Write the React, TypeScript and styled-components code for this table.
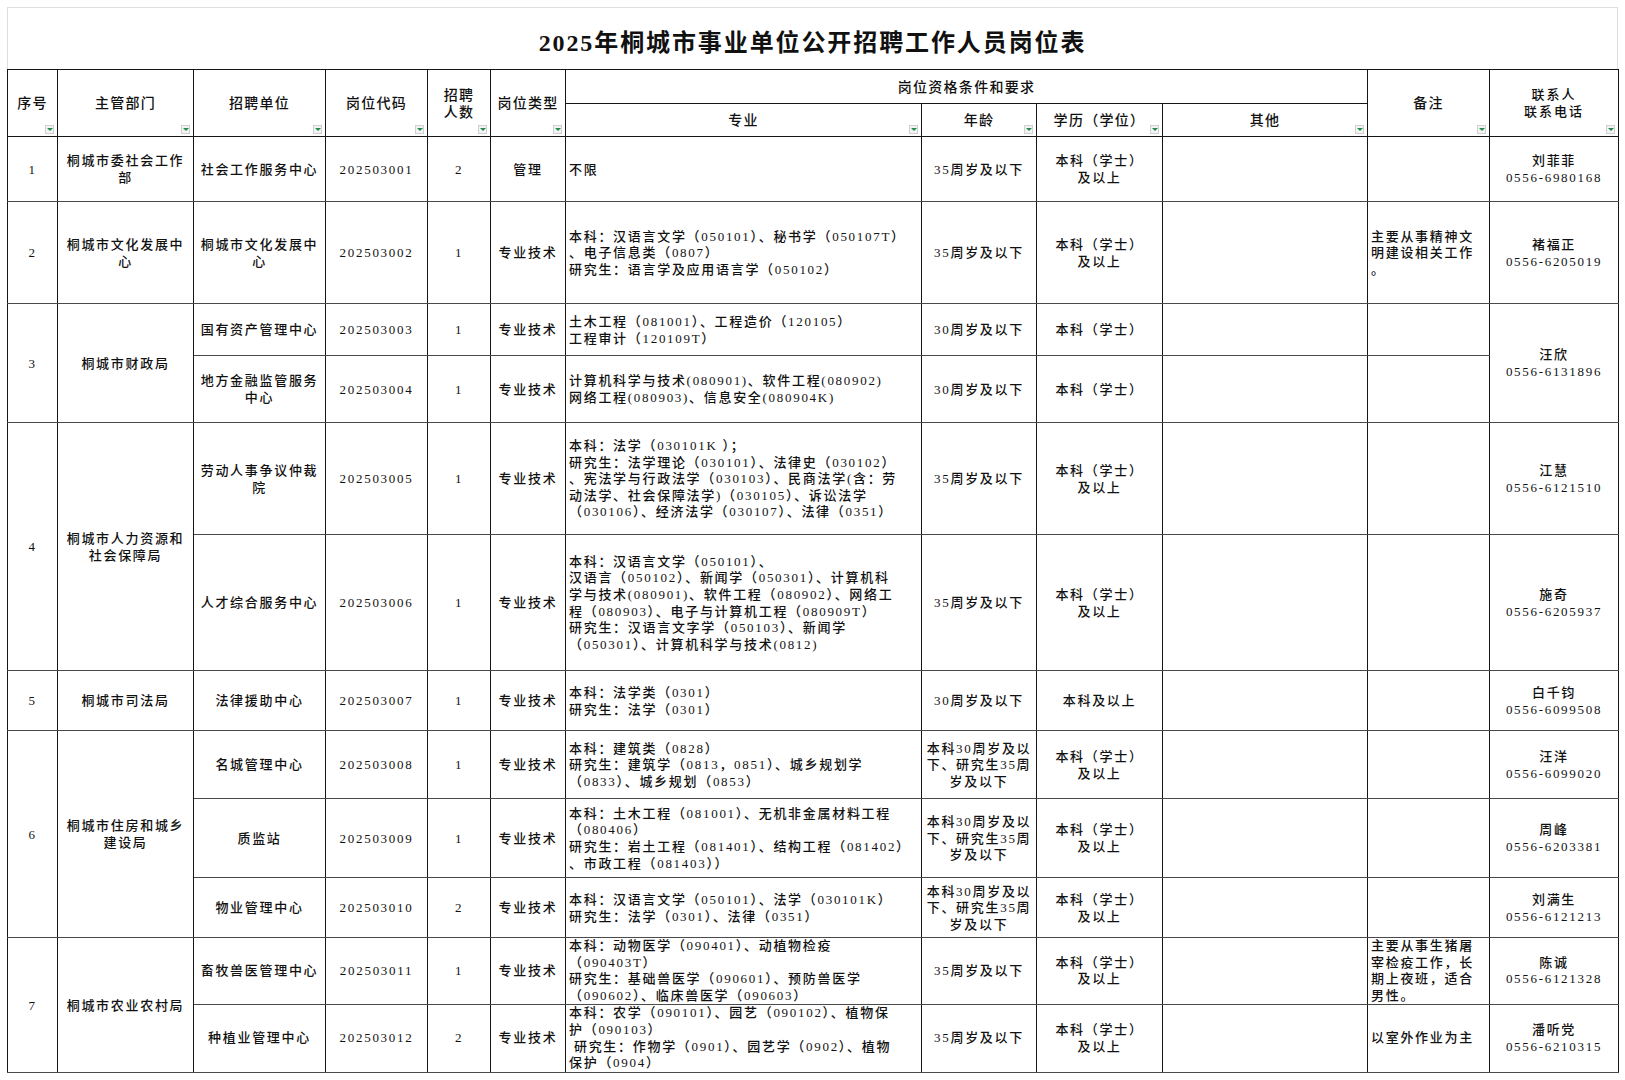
import React from "react";
import styled, { createGlobalStyle } from "styled-components";

/**--------------------------------------------
    Global page styles
-----------------------------------------------*/
const GlobalStyle = createGlobalStyle`
    html, body {
        margin: 0;
        padding: 0;
        background: #ffffff;
    }
    body {
        font-family: "Liberation Serif", "Noto Sans CJK SC", serif;
        color: #111111;
    }
`;

/**--------------------------------------------
    Styled Components for the job table
-----------------------------------------------*/
const Page = styled.div`
    padding: 7px 0 0 7px;
`;

const Sheet = styled.div`
    width: 1611px;
`;

// Title band above the grid
const TitleBar = styled.div`
    height: 62px;
    box-sizing: border-box;
    border: 1px solid #dedede;
    border-bottom: none;
    display: flex;
    align-items: center;
    justify-content: center;
    padding-top: 4px;
    font-size: 24px;
    font-weight: 700;
    letter-spacing: 1.9px;
    color: #111;
`;

const Grid = styled.table`
    width: 1611px;
    border-collapse: collapse;
    table-layout: fixed;
    font-size: 13px;
    font-weight: 500;
    letter-spacing: 1.7px;
    line-height: 16.6px;
`;

const HeadCell = styled.th`
    position: relative;
    border: 1px solid #161616;
    font-weight: 500;
    font-size: 14px;
    letter-spacing: 1.3px;
    line-height: 17px;
    padding: 1px 2px 0;
    text-align: center;
    vertical-align: middle;
    color: #111;
`;

const SmallHead = styled.span`
    display: block;
    font-size: 13px;
    letter-spacing: 2px;
    line-height: 16.6px;
`;

// Excel style filter drop-down in the header corner
const FilterButton = styled.span`
    position: absolute;
    right: 3px;
    bottom: 2px;
    width: 9px;
    height: 9px;
    box-sizing: border-box;
    border: 1px solid #d0d0d0;
    background: #f3f3f3;
    display: flex;
    align-items: center;
    justify-content: center;

    &::after {
        content: "";
        border-left: 3px solid transparent;
        border-right: 3px solid transparent;
        border-top: 3px solid #1f8c4c;
    }
`;

const Cell = styled.td<{ $align?: "left" | "center"; $dense?: boolean }>`
    border-left: 1px solid #161616;
    border-right: 1px solid #161616;
    border-top: 1px solid #4a4a4a;
    border-bottom: 1px solid #4a4a4a;
    padding-top: ${({ $dense }) => ($dense ? "0" : "2px")};
    padding-bottom: 0;
    padding-left: ${({ $align }) => ($align === "left" ? "3px" : "2px")};
    padding-right: 2px;
    text-align: ${({ $align }) => $align ?? "center"};
    vertical-align: middle;
    overflow: hidden;
`;

const Line = styled.span`
    display: block;
    white-space: pre;
`;

/**--------------------------------
    Table data
-----------------------------------*/
type Span = { lines: string[]; span: number };

type JobRow = {
    h: number;
    dense?: boolean;
    no?: Span;
    dept?: Span;
    unit: string[];
    code: string;
    count: string;
    kind: string;
    major: string[];
    age: string[];
    edu: string[];
    note: string[];
    contact?: Span;
};

const AGE_MIX = ["本科30周岁及以", "下、研究生35周", "岁及以下"];
const EDU_UP = ["本科（学士）", "及以上"];

const rows: JobRow[] = [
    {
        h: 65,
        no: { lines: ["1"], span: 1 },
        dept: { lines: ["桐城市委社会工作", "部"], span: 1 },
        unit: ["社会工作服务中心"],
        code: "202503001",
        count: "2",
        kind: "管理",
        major: ["不限"],
        age: ["35周岁及以下"],
        edu: EDU_UP,
        note: [],
        contact: { lines: ["刘菲菲", "0556-6980168"], span: 1 },
    },
    {
        h: 102,
        no: { lines: ["2"], span: 1 },
        dept: { lines: ["桐城市文化发展中", "心"], span: 1 },
        unit: ["桐城市文化发展中", "心"],
        code: "202503002",
        count: "1",
        kind: "专业技术",
        major: ["本科：汉语言文学（050101）、秘书学（050107T）", "、电子信息类（0807）", "研究生：语言学及应用语言学（050102）"],
        age: ["35周岁及以下"],
        edu: EDU_UP,
        note: ["主要从事精神文", "明建设相关工作", "。"],
        contact: { lines: ["褚福正", "0556-6205019"], span: 1 },
    },
    {
        h: 52,
        no: { lines: ["3"], span: 2 },
        dept: { lines: ["桐城市财政局"], span: 2 },
        unit: ["国有资产管理中心"],
        code: "202503003",
        count: "1",
        kind: "专业技术",
        major: ["土木工程（081001）、工程造价（120105）", "工程审计（120109T）"],
        age: ["30周岁及以下"],
        edu: ["本科（学士）"],
        note: [],
        contact: { lines: ["汪欣", "0556-6131896"], span: 2 },
    },
    {
        h: 67,
        unit: ["地方金融监管服务", "中心"],
        code: "202503004",
        count: "1",
        kind: "专业技术",
        major: ["计算机科学与技术(080901)、软件工程(080902)", "网络工程(080903)、信息安全(080904K)"],
        age: ["30周岁及以下"],
        edu: ["本科（学士）"],
        note: [],
    },
    {
        h: 112,
        no: { lines: ["4"], span: 2 },
        dept: { lines: ["桐城市人力资源和", "社会保障局"], span: 2 },
        unit: ["劳动人事争议仲裁", "院"],
        code: "202503005",
        count: "1",
        kind: "专业技术",
        major: [
            "本科：法学（030101K ）；",
            "研究生：法学理论（030101）、法律史（030102）",
            "、宪法学与行政法学（030103）、民商法学(含：劳",
            "动法学、社会保障法学)（030105）、诉讼法学",
            "（030106）、经济法学（030107）、法律（0351）",
        ],
        age: ["35周岁及以下"],
        edu: EDU_UP,
        note: [],
        contact: { lines: ["江慧", "0556-6121510"], span: 1 },
    },
    {
        h: 136,
        unit: ["人才综合服务中心"],
        code: "202503006",
        count: "1",
        kind: "专业技术",
        major: [
            "本科：汉语言文学（050101）、",
            "汉语言（050102）、新闻学（050301）、计算机科",
            "学与技术(080901)、软件工程（080902）、网络工",
            "程（080903）、电子与计算机工程（080909T）",
            "研究生：汉语言文字学（050103）、新闻学",
            "（050301）、计算机科学与技术(0812)",
        ],
        age: ["35周岁及以下"],
        edu: EDU_UP,
        note: [],
        contact: { lines: ["施奇", "0556-6205937"], span: 1 },
    },
    {
        h: 60,
        no: { lines: ["5"], span: 1 },
        dept: { lines: ["桐城市司法局"], span: 1 },
        unit: ["法律援助中心"],
        code: "202503007",
        count: "1",
        kind: "专业技术",
        major: ["本科：法学类（0301）", "研究生：法学（0301）"],
        age: ["30周岁及以下"],
        edu: ["本科及以上"],
        note: [],
        contact: { lines: ["白千钧", "0556-6099508"], span: 1 },
    },
    {
        h: 68,
        no: { lines: ["6"], span: 3 },
        dept: { lines: ["桐城市住房和城乡", "建设局"], span: 3 },
        unit: ["名城管理中心"],
        code: "202503008",
        count: "1",
        kind: "专业技术",
        major: ["本科：建筑类（0828）", "研究生：建筑学（0813，0851）、城乡规划学", "（0833）、城乡规划（0853）"],
        age: AGE_MIX,
        edu: EDU_UP,
        note: [],
        contact: { lines: ["汪洋", "0556-6099020"], span: 1 },
    },
    {
        h: 79,
        unit: ["质监站"],
        code: "202503009",
        count: "1",
        kind: "专业技术",
        major: [
            "本科：土木工程（081001）、无机非金属材料工程",
            "（080406）",
            "研究生：岩土工程（081401）、结构工程（081402）",
            "、市政工程（081403））",
        ],
        age: AGE_MIX,
        edu: EDU_UP,
        note: [],
        contact: { lines: ["周峰", "0556-6203381"], span: 1 },
    },
    {
        h: 60,
        unit: ["物业管理中心"],
        code: "202503010",
        count: "2",
        kind: "专业技术",
        major: ["本科：汉语言文学（050101）、法学（030101K）", "研究生：法学（0301）、法律（0351）"],
        age: AGE_MIX,
        edu: EDU_UP,
        note: [],
        contact: { lines: ["刘满生", "0556-6121213"], span: 1 },
    },
    {
        h: 67,
        dense: true,
        no: { lines: ["7"], span: 2 },
        dept: { lines: ["桐城市农业农村局"], span: 2 },
        unit: ["畜牧兽医管理中心"],
        code: "202503011",
        count: "1",
        kind: "专业技术",
        major: [
            "本科：动物医学（090401）、动植物检疫",
            "（090403T）",
            "研究生：基础兽医学（090601）、预防兽医学",
            "（090602）、临床兽医学（090603）",
        ],
        age: ["35周岁及以下"],
        edu: EDU_UP,
        note: ["主要从事生猪屠", "宰检疫工作，长", "期上夜班，适合", "男性。"],
        contact: { lines: ["陈诚", "0556-6121328"], span: 1 },
    },
    {
        h: 67,
        dense: true,
        unit: ["种植业管理中心"],
        code: "202503012",
        count: "2",
        kind: "专业技术",
        major: [
            "本科：农学（090101）、园艺（090102）、植物保",
            "护（090103）",
            " 研究生：作物学（0901）、园艺学（0902）、植物",
            "保护（0904）",
        ],
        age: ["35周岁及以下"],
        edu: EDU_UP,
        note: ["以室外作业为主"],
        contact: { lines: ["潘听党", "0556-6210315"], span: 1 },
    },
];

const COLS = [50, 136, 132, 102, 63, 75, 356, 115, 126, 205, 122, 129];

/**--------------------------------
    Helpers
-----------------------------------*/
const Lines: React.FC<{ lines: string[] }> = ({ lines }) => (
    <>
        {lines.map((l, i) => (
            <Line key={i}>{l}</Line>
        ))}
    </>
);

const Head: React.FC<{ rowSpan?: number; colSpan?: number; filter?: boolean; children: React.ReactNode }> = ({
    rowSpan,
    colSpan,
    filter = true,
    children,
}) => (
    <HeadCell rowSpan={rowSpan} colSpan={colSpan}>
        {children}
        {filter && <FilterButton />}
    </HeadCell>
);

/**--------------------------------
    App Component
-----------------------------------*/
export default function App() {
    return (
        <Page>
            <GlobalStyle />
            <Sheet>
                <TitleBar>2025年桐城市事业单位公开招聘工作人员岗位表</TitleBar>
                <Grid>
                    <colgroup>
                        {COLS.map((w, i) => (
                            <col key={i} style={{ width: w }} />
                        ))}
                    </colgroup>
                    <thead>
                        <tr style={{ height: 34 }}>
                            <Head rowSpan={2}>序号</Head>
                            <Head rowSpan={2}>主管部门</Head>
                            <Head rowSpan={2}>招聘单位</Head>
                            <Head rowSpan={2}>岗位代码</Head>
                            <Head rowSpan={2}>
                                招聘
                                <br />
                                人数
                            </Head>
                            <Head rowSpan={2}>岗位类型</Head>
                            <Head colSpan={4} filter={false}>
                                岗位资格条件和要求
                            </Head>
                            <Head rowSpan={2}>备注</Head>
                            <Head rowSpan={2}>
                                <SmallHead>联系人</SmallHead>
                                <SmallHead>联系电话</SmallHead>
                            </Head>
                        </tr>
                        <tr style={{ height: 33 }}>
                            <Head>专业</Head>
                            <Head>年龄</Head>
                            <Head>学历（学位）</Head>
                            <Head>其他</Head>
                        </tr>
                    </thead>
                    <tbody>
                        {rows.map((r) => (
                            <tr key={r.code} style={{ height: r.h }}>
                                {r.no && (
                                    <Cell rowSpan={r.no.span}>
                                        <Lines lines={r.no.lines} />
                                    </Cell>
                                )}
                                {r.dept && (
                                    <Cell rowSpan={r.dept.span}>
                                        <Lines lines={r.dept.lines} />
                                    </Cell>
                                )}
                                <Cell $dense={r.dense}>
                                    <Lines lines={r.unit} />
                                </Cell>
                                <Cell $dense={r.dense}>{r.code}</Cell>
                                <Cell $dense={r.dense}>{r.count}</Cell>
                                <Cell $dense={r.dense}>{r.kind}</Cell>
                                <Cell $align="left" $dense={r.dense}>
                                    <Lines lines={r.major} />
                                </Cell>
                                <Cell $dense={r.dense}>
                                    <Lines lines={r.age} />
                                </Cell>
                                <Cell $dense={r.dense}>
                                    <Lines lines={r.edu} />
                                </Cell>
                                <Cell $dense={r.dense} />
                                <Cell $align="left" $dense={r.dense}>
                                    <Lines lines={r.note} />
                                </Cell>
                                {r.contact && (
                                    <Cell rowSpan={r.contact.span} $dense={r.dense}>
                                        <Lines lines={r.contact.lines} />
                                    </Cell>
                                )}
                            </tr>
                        ))}
                    </tbody>
                </Grid>
            </Sheet>
        </Page>
    );
}
